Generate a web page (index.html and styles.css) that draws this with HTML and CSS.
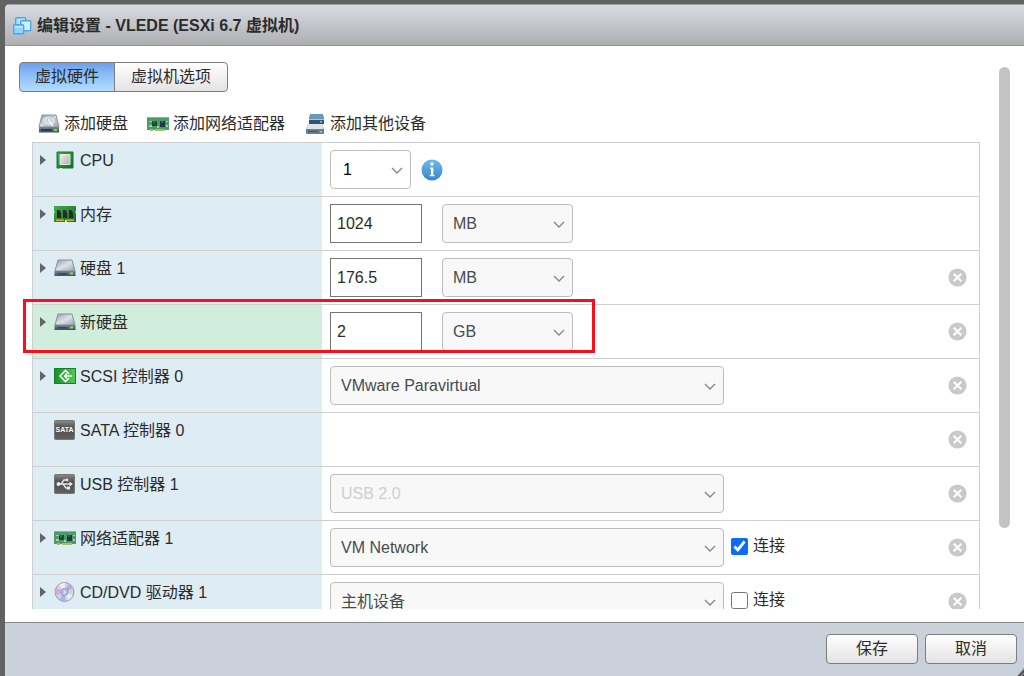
FILE: index.html
```
<!DOCTYPE html>
<html lang="zh-CN">
<head>
    <meta charset="UTF-8">
    <meta name="viewport" content="width=device-width, initial-scale=1.0">
    <link rel="stylesheet" href="styles.css">
    <title>编辑设置 - VLEDE</title>
</head>
<body>
    <!-- icons -->
    <svg class="sprite" aria-hidden="true">
        <defs>
            <linearGradient id="silver" x1="0" y1="0" x2="1" y2="1">
                <stop offset="0" stop-color="#8f99a5"/>
                <stop offset=".5" stop-color="#dde2e7"/>
                <stop offset="1" stop-color="#98a2ae"/>
            </linearGradient>
            <linearGradient id="plate" x1="0" y1="0" x2="1" y2="1">
                <stop offset="0" stop-color="#f2f2f2"/>
                <stop offset="1" stop-color="#adadad"/>
            </linearGradient>
            <linearGradient id="slate" x1="0" y1="0" x2="0" y2="1">
                <stop offset="0" stop-color="#75899b"/>
                <stop offset="1" stop-color="#3e4d5c"/>
            </linearGradient>
            <linearGradient id="green" x1="0" y1="0" x2="1" y2="1">
                <stop offset="0" stop-color="#40ae45"/>
                <stop offset="1" stop-color="#146b25"/>
            </linearGradient>
            <linearGradient id="scsi" x1="0" y1="0" x2="1" y2="0">
                <stop offset="0" stop-color="#168f2c"/>
                <stop offset="1" stop-color="#54c956"/>
            </linearGradient>
            <linearGradient id="dark" x1="0" y1="0" x2="0" y2="1">
                <stop offset="0" stop-color="#8b8b8b"/>
                <stop offset=".4" stop-color="#4c4c4c"/>
                <stop offset="1" stop-color="#626262"/>
            </linearGradient>
            <linearGradient id="blue" x1="0" y1="0" x2="0" y2="1">
                <stop offset="0" stop-color="#6db9ee"/>
                <stop offset="1" stop-color="#3b87c8"/>
            </linearGradient>
        </defs>
        <symbol id="i-vm" viewBox="0 0 20 20">
            <g stroke="#4ba6ee" stroke-width="1.4">
                <rect x="3.7" y="1.7" width="10" height="9" rx="1" fill="#b9e2ff"/>
                <rect x="8.7" y="4.7" width="10" height="10" rx="1" fill="#d3eeff"/>
                <rect x="1.7" y="8.7" width="10" height="9" rx="1" fill="#8fd2fa"/>
            </g>
            <path d="M2.500 11h8.500" stroke="#e9f7ff"/>
        </symbol>
        <symbol id="i-adddisk" viewBox="0 0 22 20">
            <path d="M4 1h14l3 12H1z" fill="url(#silver)" stroke="#87919d"/>
            <ellipse cx="11" cy="7" rx="7" ry="5" fill="#d9dee3" stroke="#aab3bc"/>
            <ellipse cx="11" cy="6" rx="2" ry="1.300" fill="#fff" stroke="#a2aab3" stroke-width=".6"/>
            <path d="M11 7l4 5" stroke="#f7f9fa" stroke-width="1.500"/>
            <path d="M1 13h20v5.500H1z" fill="url(#slate)"/>
            <path d="M3 15h11v2H3z" fill="#2e3a46"/>
            <rect x="16" y="15" width="3" height="2" fill="#7bdc3e"/>
        </symbol>
        <symbol id="i-disk" viewBox="0 0 22 20">
            <path d="M4 2h14l3 11H1z" fill="url(#silver)" stroke="#87919d"/>
            <path d="M.5 13h21v5H.5z" fill="url(#slate)"/>
            <path d="M4 15h9v1.500H4z" fill="#3a4754"/>
            <rect x="16" y="14.500" width="3" height="2" fill="#8ee04b"/>
        </symbol>
        <symbol id="i-nic" viewBox="0 0 22 20">
            <path d="M0 3h22v13H5v-1H3v1H0z" fill="#4e9a68"/>
            <path d="M0 3h22v1H0z" fill="#7fbd91"/>
            <path d="M3 15h3v2H3zM8 15h10v2H8z" fill="#a7bd69"/>
            <path d="M2 7h3v1H2zM2 11h3v2H2zM10 12h2v2h-2zM19 7h2v1h-2zM19 11h2v2h-2z" fill="#a2cfaa"/>
            <rect x="5" y="7" width="5" height="5" fill="#1e4939"/>
            <rect x="13" y="7" width="5" height="6" fill="#1e3742"/>
            <path d="M6 8h2M14 8h2" stroke="#668d88"/>
        </symbol>
        <symbol id="i-device" viewBox="0 0 22 20">
            <path d="M6 1q0-1 1-1h11q1 0 1 1l1 4v5H5V5z" fill="#2f5474"/>
            <path d="M7 0h11q1 0 1 1l1 4H5l1-4q0-1 1-1z" fill="#6d97b8"/>
            <path d="M5 5.500h15" stroke="#a9c6da"/>
            <path d="M4 10h14l2 5v4q0 1-1 1H3q-1 0-1-1v-4z" fill="#6b8093"/>
            <path d="M4 10h14l2 5H2z" fill="#dde4ea"/>
            <path d="M4 17.500h10" stroke="#46586a" stroke-width="1.500"/>
            <rect x="16" y="17" width="2" height="1.500" fill="#83e354"/>
            <rect x="16" y="7" width="2" height="1.500" fill="#83e354"/>
        </symbol>
        <symbol id="i-cpu" viewBox="0 0 22 20">
            <path d="M3 2h16v16H8l-1-1-1 1H3z" fill="url(#green)" stroke="#1d7530"/>
            <path d="M6 4.500h10v10H6z" fill="url(#plate)" stroke="#dfe8df"/>
        </symbol>
        <symbol id="i-memory" viewBox="0 0 22 20">
            <path d="M0 2h22v5l-1 1 1 1v9h-9v-2h-2v2H0V9l1-1-1-1z" fill="url(#green)"/>
            <path d="M3 6h4v8H3zM9 6h4v8H9zM15 6h4v8h-4z" fill="#222b26"/>
            <path d="M5 6l2 3v-3zM11 6l2 3v-3zM17 6l2 3v-3z" fill="#59635d"/>
            <path d="M2 15.500h8V17H2zM12 15.500h8V17h-8z" fill="#d8a936"/>
        </symbol>
        <symbol id="i-scsi" viewBox="0 0 22 20">
            <rect x=".5" y="2.500" width="21" height="15" fill="url(#scsi)" stroke="#14812a"/>
            <path d="M15 8l-3.500-3.500L6 10l5.500 5.500L15 12M18 10h-7M13 7.500L10.500 10l2.500 2.500" fill="none" stroke="#eefaf0" stroke-width="1.600"/>
        </symbol>
        <symbol id="i-usb" viewBox="0 0 22 20">
            <rect x=".5" y=".5" width="20" height="19" rx="1" fill="url(#dark)" stroke="#777"/>
            <path d="M4 10h12M7 10l3-4h3M9 10l3 4h2" fill="none" stroke="#e8e8e8" stroke-width="1.300"/>
            <circle cx="4.500" cy="10" r="2" fill="#e8e8e8"/>
            <circle cx="13" cy="6" r="1.400" fill="#e8e8e8"/>
            <path d="M13 12.500h3v3h-3zM15.500 7.500l3.500 2.500-3.500 2.500z" fill="#e8e8e8"/>
        </symbol>
        <symbol id="i-cd" viewBox="0 0 22 20">
            <circle cx="10.500" cy="10" r="9.500" fill="#cfd1dc" stroke="#9d9fab"/>
            <path d="M10.500 10L2 6A9 9 0 0 0 2 13z" fill="#d8a5e4"/>
            <path d="M10.500 10l-5 8a9 9 0 0 0 6 1z" fill="#a5b4f1"/>
            <path d="M10.500 10l4-8a9 9 0 0 1 4 4z" fill="#bba5e8"/>
            <path d="M10.500 10L5 3a9 9 0 0 1 6-2z" fill="#f0f0f4"/>
            <path d="M10.500 10l8 3a9 9 0 0 1-4 5z" fill="#eceef5"/>
            <circle cx="10.500" cy="10" r="3.500" fill="#c9d9f0" stroke="#7893bf"/>
            <circle cx="10.500" cy="10" r="1.500" fill="#fff" stroke="#7893bf" stroke-width=".7"/>
        </symbol>
        <symbol id="i-arrow" viewBox="0 0 6 10">
            <path d="M0 0l6 5-6 5z" fill="#666"/>
        </symbol>
        <symbol id="i-info" viewBox="0 0 22 22">
            <circle cx="11" cy="11" r="10.500" fill="url(#blue)"/>
            <circle cx="11" cy="5" r="1.700" fill="#fff"/>
            <path d="M9 8.500h3.300v7.500h1.200v1.300H8.700V16h1.200V9.800H9z" fill="#fff"/>
        </symbol>
        <symbol id="i-remove" viewBox="0 0 20 20">
            <circle cx="10" cy="10" r="9.500" fill="#c9c9c9"/>
            <path d="M6 6l8 8M14 6l-8 8" stroke="#fff" stroke-width="2.200"/>
        </symbol>
    </svg>

    <div class="dialog" role="dialog" aria-labelledby="title">
        <header class="header">
            <svg class="header-icon"><use href="#i-vm"/></svg>
            <h1 id="title">编辑设置 - VLEDE (ESXi 6.7 虚拟机)</h1>
        </header>

        <main class="main">
            <div class="content">
                <div class="tabs">
                    <button type="button" class="tab active">虚拟硬件</button>
                    <button type="button" class="tab">虚拟机选项</button>
                </div>

                <nav class="toolbar">
                    <a href="#"><svg class="icon"><use href="#i-adddisk"/></svg>添加硬盘</a>
                    <a href="#"><svg class="icon"><use href="#i-nic"/></svg>添加网络适配器</a>
                    <a href="#"><svg class="icon"><use href="#i-device"/></svg>添加其他设备</a>
                </nav>

                <form class="devices" id="settings">
                    <div class="row">
                        <div class="name">
                            <button type="button" class="expand" aria-label="展开"><svg><use href="#i-arrow"/></svg></button>
                            <svg class="icon"><use href="#i-cpu"/></svg>
                            <label for="cpu">CPU</label>
                        </div>
                        <div class="value">
                            <select id="cpu" class="select-cpu"><option>1</option></select>
                            <button type="button" class="info" aria-label="信息"><svg><use href="#i-info"/></svg></button>
                        </div>
                    </div>

                    <div class="row">
                        <div class="name">
                            <button type="button" class="expand" aria-label="展开"><svg><use href="#i-arrow"/></svg></button>
                            <svg class="icon"><use href="#i-memory"/></svg>
                            <label for="memory">内存</label>
                        </div>
                        <div class="value">
                            <input type="text" id="memory" value="1024">
                            <select class="select-unit" aria-label="内存单位"><option>MB</option><option>GB</option></select>
                        </div>
                    </div>

                    <div class="row">
                        <div class="name">
                            <button type="button" class="expand" aria-label="展开"><svg><use href="#i-arrow"/></svg></button>
                            <svg class="icon"><use href="#i-disk"/></svg>
                            <label for="disk1">硬盘 1</label>
                        </div>
                        <div class="value">
                            <input type="text" id="disk1" value="176.5">
                            <select class="select-unit" aria-label="硬盘 1 单位"><option>MB</option><option>GB</option></select>
                            <button type="button" class="remove" aria-label="移除"><svg><use href="#i-remove"/></svg></button>
                        </div>
                    </div>

                    <div class="row new">
                        <div class="name">
                            <button type="button" class="expand" aria-label="展开"><svg><use href="#i-arrow"/></svg></button>
                            <svg class="icon"><use href="#i-disk"/></svg>
                            <label for="newdisk">新硬盘</label>
                        </div>
                        <div class="value">
                            <input type="text" id="newdisk" value="2">
                            <select class="select-unit" aria-label="新硬盘单位"><option>GB</option><option>MB</option></select>
                            <button type="button" class="remove" aria-label="移除"><svg><use href="#i-remove"/></svg></button>
                        </div>
                        <div class="marker"></div>
                    </div>

                    <div class="row">
                        <div class="name">
                            <button type="button" class="expand" aria-label="展开"><svg><use href="#i-arrow"/></svg></button>
                            <svg class="icon"><use href="#i-scsi"/></svg>
                            <label for="scsi0">SCSI 控制器 0</label>
                        </div>
                        <div class="value">
                            <select id="scsi0" class="select-wide"><option>VMware Paravirtual</option></select>
                            <button type="button" class="remove" aria-label="移除"><svg><use href="#i-remove"/></svg></button>
                        </div>
                    </div>

                    <div class="row">
                        <div class="name leaf">
                            <svg class="icon" viewBox="0 0 22 20">
                                <rect x=".5" y=".5" width="20" height="19" rx="1" fill="url(#dark)" stroke="#777"/>
                                <text x="10.500" y="12" class="sata-text" text-anchor="middle">SATA</text>
                            </svg>
                            <span>SATA 控制器 0</span>
                        </div>
                        <div class="value">
                            <button type="button" class="remove" aria-label="移除"><svg><use href="#i-remove"/></svg></button>
                        </div>
                    </div>

                    <div class="row">
                        <div class="name leaf">
                            <svg class="icon"><use href="#i-usb"/></svg>
                            <label for="usb1">USB 控制器 1</label>
                        </div>
                        <div class="value">
                            <select id="usb1" class="select-wide" disabled><option>USB 2.0</option></select>
                            <button type="button" class="remove" aria-label="移除"><svg><use href="#i-remove"/></svg></button>
                        </div>
                    </div>

                    <div class="row">
                        <div class="name">
                            <button type="button" class="expand" aria-label="展开"><svg><use href="#i-arrow"/></svg></button>
                            <svg class="icon"><use href="#i-nic"/></svg>
                            <label for="net1">网络适配器 1</label>
                        </div>
                        <div class="value">
                            <select id="net1" class="select-wide"><option>VM Network</option></select>
                            <label class="connect"><input type="checkbox" checked>连接</label>
                            <button type="button" class="remove" aria-label="移除"><svg><use href="#i-remove"/></svg></button>
                        </div>
                    </div>

                    <div class="row">
                        <div class="name">
                            <button type="button" class="expand" aria-label="展开"><svg><use href="#i-arrow"/></svg></button>
                            <svg class="icon"><use href="#i-cd"/></svg>
                            <label for="cd1">CD/DVD 驱动器 1</label>
                        </div>
                        <div class="value">
                            <select id="cd1" class="select-wide"><option>主机设备</option></select>
                            <label class="connect"><input type="checkbox">连接</label>
                            <button type="button" class="remove" aria-label="移除"><svg><use href="#i-remove"/></svg></button>
                        </div>
                    </div>
                </form>
            </div>
            <div class="scrollbar"><div class="thumb"></div></div>
        </main>

        <footer class="footer">
            <button type="submit" form="settings" class="btn">保存</button>
            <button type="button" class="btn">取消</button>
            <span class="grip"></span>
        </footer>
    </div>
</body>
</html>
```
FILE: styles.css
```
*{
    box-sizing: border-box;
}
body{
    margin: 0;
    height: 100vh;
    padding: 4px 0 0 5px;
    overflow: hidden;
    background-color: #626262;
    color: #2b2b2b;
    font-family: "Liberation Sans", "Noto Sans CJK SC", sans-serif;
    font-size: 16px;
    line-height: 22px;
}
button, input, select{
    margin: 0;
    font: inherit;
    color: inherit;
}
svg{
    display: block;
    flex: none;
}
.sprite{
    position: absolute;
    width: 0;
    height: 0;
}
.sata-text{
    font-size: 7px;
    font-weight: bold;
    fill: #fff;
}

.dialog{
    display: flex;
    flex-direction: column;
    height: 100%;
    background-color: #fff;
    border-radius: 5px 0 0 0;
    overflow: hidden;
}

/* header */
.header{
    display: flex;
    align-items: center;
    gap: 5px;
    height: 42px;
    padding: 2px 7px 0;
    border-top: 1px solid #a0a0a4;
    border-bottom: 1px solid #929296;
    background: linear-gradient(#d8dbe1, #aeafb3);
}
.header-icon{
    width: 20px;
    height: 20px;
}
.header h1{
    margin: 0;
    font-size: 16px;
    font-weight: bold;
}

.main{
    display: flex;
    flex: 1;
    gap: 19px;
    min-height: 0;
    padding: 0 14px 13px;
}
.content{
    flex: 1;
    min-width: 0;
    padding-top: 16px;
    overflow-y: auto;
    scrollbar-width: none;
}
.scrollbar{
    width: 11px;
    padding-top: 21px;
}
.thumb{
    height: 85%;
    border-radius: 6px;
    background-color: #c3c3c3;
}

/* tabs */
.tabs{
    display: flex;
}
.tab{
    height: 30px;
    padding: 0 16px;
    border: 1px solid #7d7d7d;
    border-radius: 0 4px 4px 0;
    background: linear-gradient(#fff, #e3e3e3);
}
.tab.active{
    margin-right: -1px;
    padding: 0 15px;
    border-radius: 4px 0 0 4px;
    background: linear-gradient(#6d9eea, #8abdf8 40%, #b3dcff);
}

/* toolbar */
.toolbar{
    display: flex;
    gap: 19px;
    padding: 21px 19px 7px;
}
.toolbar a{
    display: flex;
    align-items: center;
    gap: 4px;
    color: inherit;
    text-decoration: none;
}
.icon{
    width: 22px;
    height: 20px;
}

/* device list */
.devices{
    margin-left: 13px;
    border: 1px solid #cfcfcf;
}
.row{
    position: relative;
    display: flex;
    min-height: 54px;
    border-bottom: 1px solid #cfcfcf;
}
.name{
    display: flex;
    align-items: flex-start;
    gap: 4px;
    width: 289px;
    padding: 7px 0 7px 7px;
    background-color: #deecf4;
}
.name.leaf{
    padding-left: 21px;
}
.row.new .name{
    background-color: #d0eedb;
}
.expand{
    width: 10px;
    padding: 5px 4px 5px 0;
    border: none;
    background: none;
}
.expand svg{
    width: 6px;
    height: 10px;
}
.value{
    display: flex;
    flex: 1;
    align-items: center;
    padding: 0 12px 0 8px;
}
.value input[type="text"]{
    width: 92px;
    height: 39px;
    margin-right: 20px;
    padding: 0 6px;
    border: 1px solid #767676;
    border-radius: 0;
    background-color: #fff;
}
select{
    height: 39px;
    padding: 0 30px 0 10px;
    border: 1px solid #bdbdbd;
    border-radius: 4px;
    appearance: none;
    background: #f8f8f8 url("data:image/svg+xml,%3Csvg xmlns='http://www.w3.org/2000/svg' width='12' height='8' viewBox='0 0 12 8'%3E%3Cpath d='M1 1l5 5 5-5' fill='none' stroke='%23888' stroke-width='1.4'/%3E%3C/svg%3E") no-repeat right 7px top 16px;
}
.value select{
    color: #454c50;
}
.value select:disabled{
    color: #cfcfcf;
    opacity: 1;
}
.value .select-cpu{
    width: 81px;
    padding-left: 12px;
    background-color: #fff;
    color: #000;
}
.select-unit{
    width: 131px;
}
.select-wide{
    width: 394px;
}
.info, .remove{
    padding: 0;
    border: none;
    background: none;
}
.info{
    margin-left: 10px;
}
.info svg{
    width: 22px;
    height: 22px;
}
.remove{
    margin-left: auto;
}
.remove svg{
    width: 19px;
    height: 19px;
}
.connect{
    display: flex;
    align-items: center;
    gap: 5px;
    margin-left: 7px;
    padding-bottom: 3px;
}
.connect input{
    width: 17px;
    height: 17px;
    accent-color: #0a6cff;
}

/* red frame round the new disk */
.marker{
    position: absolute;
    top: -6px;
    left: -10px;
    width: 572px;
    height: 54px;
    border: 3px solid #fb0d1b;
    pointer-events: none;
}

/* footer */
.footer{
    position: relative;
    display: flex;
    justify-content: flex-end;
    gap: 7px;
    padding: 11px 7px 12px;
    border-top: 1px solid #858789;
    background-color: #cad1da;
}
.btn{
    width: 92px;
    height: 30px;
    padding: 0;
    border: 1px solid #7d7d7d;
    border-radius: 4px;
    background: linear-gradient(#fff, #e3e3e3);
}
.grip{
    position: absolute;
    right: 0;
    bottom: 0;
    width: 7px;
    height: 8px;
    background: repeating-linear-gradient(135deg, #555 0 2px, #999 2px 3px);
    clip-path: polygon(100% 0, 100% 100%, 0 100%);
}
```
